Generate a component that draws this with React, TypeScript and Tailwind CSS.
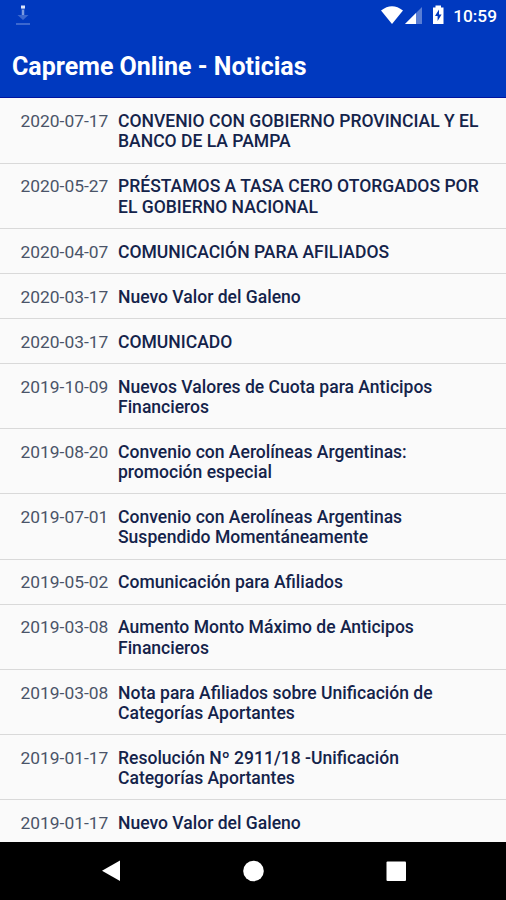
import React from 'react';

const noticias = [
  { date: '2020-07-17', lines: ['CONVENIO CON GOBIERNO PROVINCIAL Y EL', 'BANCO DE LA PAMPA'] },
  { date: '2020-05-27', lines: ['PRÉSTAMOS A TASA CERO OTORGADOS POR', 'EL GOBIERNO NACIONAL'] },
  { date: '2020-04-07', lines: ['COMUNICACIÓN PARA AFILIADOS'] },
  { date: '2020-03-17', lines: ['Nuevo Valor del Galeno'] },
  { date: '2020-03-17', lines: ['COMUNICADO'] },
  { date: '2019-10-09', lines: ['Nuevos Valores de Cuota para Anticipos', 'Financieros'] },
  { date: '2019-08-20', lines: ['Convenio con Aerolíneas Argentinas:', 'promoción especial'] },
  { date: '2019-07-01', lines: ['Convenio con Aerolíneas Argentinas', 'Suspendido Momentáneamente'] },
  { date: '2019-05-02', lines: ['Comunicación para Afiliados'] },
  { date: '2019-03-08', lines: ['Aumento Monto Máximo de Anticipos', 'Financieros'] },
  { date: '2019-03-08', lines: ['Nota para Afiliados sobre Unificación de', 'Categorías Aportantes'] },
  { date: '2019-01-17', lines: ['Resolución Nº 2911/18 -Unificación', 'Categorías Aportantes'] },
  { date: '2019-01-17', lines: ['Nuevo Valor del Galeno'] },
];

const StatusBar: React.FC = () => (
  <div className="flex h-8 items-center justify-between pl-4 pr-[9px]">
    <svg width="15" height="32" viewBox="0 0 15 32">
      <path d="M5.500 8h3v7h4L7 20l-5.500-5h4z" fill="#3c68cf" />
      <path d="M0 23h14v2H0z" fill="#3c68cf" />
      <path d="M5 5.500h4v3H5z" fill="#dbe5fa" />
      <path d="M6 10h2v5H6z" fill="#7c9be0" />
    </svg>
    <div className="flex items-center text-white">
      <svg width="64" height="32" viewBox="0 0 64 32" fill="currentColor">
        <path d="M0 10.500Q11 2 22 10.500L11 24z" />
        <path d="M41 7v17H24z" opacity=".35" />
        <path d="M35 13v11H24z" />
        <path d="M52 7.500h2.500v-2H60v2h2.500V24H52zM58 9.500l-4 6.500h2.600v5l4-6.500H58z" fillRule="evenodd" />
      </svg>
      <span className="ml-2 text-[17.300px] font-medium leading-8">10:59</span>
    </div>
  </div>
);

export default function App() {
  return (
    <div className="flex h-[900px] w-[506px] flex-col overflow-hidden bg-[#fafafa] font-['Roboto','Liberation_Sans',sans-serif]">
      <header className="h-[98px] shrink-0 border-b border-[#0014a0] bg-[#0039bf] text-white">
        <StatusBar />
        <h1 className="pl-3 pt-0.5 text-[25px] font-bold leading-[66px]">Capreme Online - Noticias</h1>
      </header>

      <main className="min-h-0 flex-1 overflow-hidden pt-[0.500px]">
        {noticias.map((n, i) => (
          <div
            key={i}
            className="flex border-b border-[#d9d9d9] pb-[11.130px] pl-[20.500px] pt-[12.700px] text-[17.500px] leading-[20.200px] last:border-b-0"
          >
            <div className="w-[97.500px] shrink-0 text-[17.400px] text-[#4a5468]">{n.date}</div>
            <div className="whitespace-nowrap text-[17.540px] font-medium text-[#14234a]">
              {n.lines.map((line) => (
                <div key={line}>{line}</div>
              ))}
            </div>
          </div>
        ))}
      </main>

      <nav className="h-[58px] shrink-0 bg-black text-white">
        <svg width="506" height="58" viewBox="0 0 506 58" fill="currentColor">
          <path d="M120 18.500v20.500L102 28.800z" />
          <circle cx="253.500" cy="29" r="10.300" />
          <rect x="386.500" y="19.500" width="19.500" height="19.500" rx="1" />
        </svg>
      </nav>
    </div>
  );
}
